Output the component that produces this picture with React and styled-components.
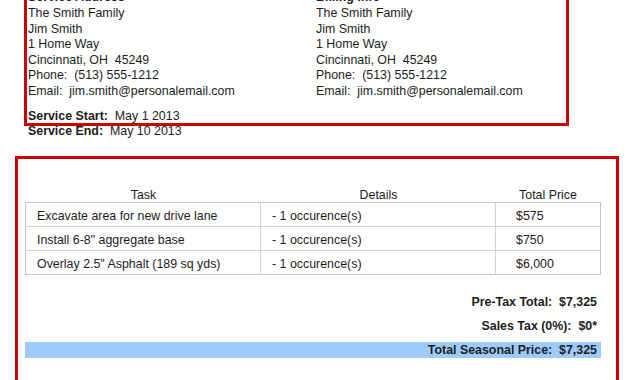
import React from 'react';
import styled, { createGlobalStyle } from 'styled-components';

const GlobalStyle = createGlobalStyle`
  html, body { margin: 0; padding: 0; background: #ffffff; }
  body {
    font-family: "Liberation Sans", Arial, sans-serif;
    color: #1d1d1d;
    overflow: hidden;
  }
`;

const Page = styled.div`
  width: 630px;
  height: 380px;
  overflow: hidden;
`;

const AddressBox = styled.section`
  margin: -12.7px 0 0 24px;
  width: 545px;
  box-sizing: border-box;
  border: 3px solid #cc0000;
  padding: 0 0 0 1px;
`;

const Columns = styled.div`
  display: grid;
  grid-template-columns: 288px 1fr;
`;

const Column = styled.div`
  display: flex;
  flex-direction: column;
`;

const Line = styled.div`
  font-size: 12.4px;
  line-height: 15.6px;
  white-space: pre;
  font-weight: ${(p) => (p.$bold ? 700 : 400)};
`;

const DateLine = styled.div`
  font-size: 12.4px;
  line-height: 14px;
  white-space: pre;
  margin-top: ${(p) => p.$mt || '0'};
  padding-left: ${(p) => p.$pl || '0'};
`;

const Label = styled.span`
  font-weight: 700;
`;

const QuoteBox = styled.section`
  margin: 17.3px 0 0 15px;
  width: 604px;
  height: 260px;
  box-sizing: border-box;
  border: 3px solid #cc0000;
  padding: 30.2px 15px 0 7px;
`;

const HeaderGrid = styled.div`
  display: grid;
  grid-template-columns: 235px 235px 1fr;
  padding: 0 1px;
`;

const HeadCell = styled.div`
  font-size: 12.4px;
  line-height: 13px;
  text-align: center;
`;

const BodyGrid = styled.div`
  display: grid;
  grid-template-columns: 235px 235px 1fr;
  border: 1px solid #c6c6c6;
`;

const Cell = styled.div`
  font-size: 12.4px;
  line-height: 15px;
  padding: 6px 0 2px ${(p) => p.$pad};
  white-space: pre;
  border-right: ${(p) => (p.$last ? 'none' : '1px solid #d2d2d2')};
  border-bottom: ${(p) => (p.$lastRow ? 'none' : '1px solid #d2d2d2')};
`;

const Totals = styled.div`
  margin-top: 19.7px;
  display: flex;
  flex-direction: column;
  gap: 7.6px;
`;

const TotalRow = styled.div`
  font-size: 12.4px;
  line-height: 16px;
  font-weight: 700;
  text-align: right;
  white-space: pre;
  padding-right: 4px;
  background: ${(p) => (p.$highlight ? '#9dcbfc' : 'transparent')};
`;

const service = [
  'The Smith Family',
  'Jim Smith',
  '1 Home Way',
  'Cincinnati, OH  45249',
  'Phone:  (513) 555-1212',
  'Email:  jim.smith@personalemail.com',
];

const rows = [
  ['Excavate area for new drive lane', '- 1 occurence(s)', '$575'],
  ['Install 6-8" aggregate base', '- 1 occurence(s)', '$750'],
  ['Overlay 2.5" Asphalt (189 sq yds)', '- 1 occurence(s)', '$6,000'],
];

const pads = ['11px', '11px', '20px'];

export default function App() {
  return (
    <Page>
      <GlobalStyle />
      <AddressBox>
        <Columns>
          <Column>
            <Line $bold>Service Address</Line>
            {service.map((t) => (
              <Line key={t}>{t}</Line>
            ))}
          </Column>
          <Column>
            <Line $bold>Billing Info</Line>
            {service.map((t) => (
              <Line key={t}>{t}</Line>
            ))}
          </Column>
        </Columns>
        <DateLine $mt="9.8px">
          <Label>Service Start:</Label>{'  May 1 2013'}
        </DateLine>
      </AddressBox>
      <DateLine $mt="-2px" $pl="28px">
        <Label>Service End:</Label>{'  May 10 2013'}
      </DateLine>
      <QuoteBox>
        <HeaderGrid>
          <HeadCell>Task</HeadCell>
          <HeadCell>Details</HeadCell>
          <HeadCell>Total Price</HeadCell>
        </HeaderGrid>
        <BodyGrid>
          {rows.map((r, ri) =>
            r.map((c, ci) => (
              <Cell
                key={`${ri}-${ci}`}
                $pad={pads[ci]}
                $last={ci === 2}
                $lastRow={ri === rows.length - 1}
              >
                {c}
              </Cell>
            ))
          )}
        </BodyGrid>
        <Totals>
          <TotalRow>{'Pre-Tax Total:  $7,325'}</TotalRow>
          <TotalRow>{'Sales Tax (0%):  $0*'}</TotalRow>
          <TotalRow $highlight>{'Total Seasonal Price:  $7,325'}</TotalRow>
        </Totals>
      </QuoteBox>
    </Page>
  );
}
